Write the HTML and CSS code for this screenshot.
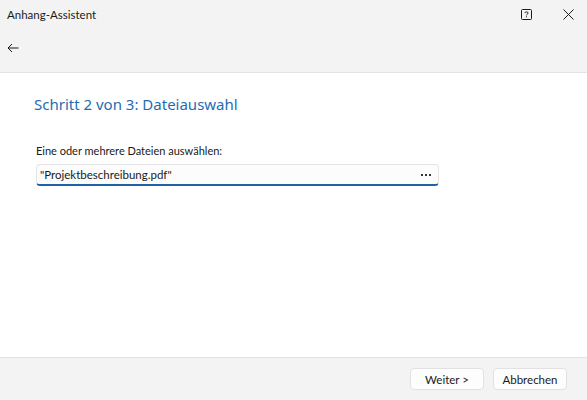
FILE: index.html
```html
<!DOCTYPE html>
<html lang="de">
<head>
  <meta charset="UTF-8" />
  <title>Anhang-Assistent</title>
  <link rel="stylesheet" href="styles.css">
</head>
<body>
  <div class="window">
    <header class="top">
      <div class="titlebar">
        <span class="title">Anhang-Assistent</span>
        <div class="caption-buttons">
          <svg class="help" width="11" height="11" viewBox="0 0 11 11">
            <rect x="0.5" y="0.5" width="10" height="10" rx="1" fill="none" stroke="#1a1a1a" stroke-width="1"/>
            <path d="M3.8 4 C3.8 2.6 7.2 2.6 7.2 4 C7.2 5 5.5 5 5.5 6.3" fill="none" stroke="#1a1a1a" stroke-width="1"/>
            <rect x="5" y="7.3" width="1" height="1" fill="#1a1a1a"/>
          </svg>
          <svg class="close" width="11" height="11" viewBox="0 0 11 11">
            <path d="M0.5 0.5 L10.5 10.5 M10.5 0.5 L0.5 10.5" stroke="#1a1a1a" stroke-width="1"/>
          </svg>
        </div>
      </div>
      <div class="navbar">
        <svg class="back" width="12" height="10" viewBox="0 0 12 10">
          <path d="M11.5 5 H1 M5 1 L1 5 L5 9" fill="none" stroke="#1a1a1a" stroke-width="1"/>
        </svg>
      </div>
    </header>

    <main class="content">
      <h1 class="step-title">Schritt 2 von 3: Dateiauswahl</h1>
      <label class="field-label" for="files">Eine oder mehrere Dateien auswählen:</label>
      <div class="file-input">
        <span id="files" class="file-value">"Projektbeschreibung.pdf"</span>
        <svg class="browse" width="10" height="2" viewBox="0 0 10 2">
          <rect x="0" y="0" width="2" height="2" fill="#333"/>
          <rect x="4" y="0" width="2" height="2" fill="#333"/>
          <rect x="8" y="0" width="2" height="2" fill="#333"/>
        </svg>
      </div>
    </main>

    <footer class="bottom">
      <button class="btn">Weiter &gt;</button>
      <button class="btn">Abbrechen</button>
    </footer>
  </div>
</body>
</html>
```

FILE: styles.css
```css
body {
  margin: 0;
  font-family: 'Lato', 'Noto Sans', sans-serif;
  font-size: 11px;
  color: #1a1a1a;
  background: #ffffff;
}
.window {
  width: 587px;
  height: 400px;
  display: flex;
  flex-direction: column;
}
.top {
  background: #f3f3f3;
  border-bottom: 1px solid #e3e3e3;
  height: 73px;
  box-sizing: border-box;
}
.titlebar {
  height: 28px;
  display: flex;
  justify-content: space-between;
  align-items: center;
  padding: 0 13px 0 7px;
}
.title {
  font-size: 11.5px;
}
.caption-buttons {
  display: flex;
  gap: 31px;
  align-items: center;
}
.navbar {
  height: 40px;
  display: flex;
  align-items: center;
  padding-left: 7px;
}
.content {
  flex: 1;
  padding: 0 36px;
  background: #ffffff;
}
.step-title {
  margin: 20px 0 0 -2px;
  font-family: 'Noto Sans', sans-serif;
  font-size: 15px;
  font-weight: normal;
  color: #1e6db3;
  line-height: 22px;
}
.field-label {
  display: block;
  margin-top: 28px;
  line-height: 16px;
}
.file-input {
  margin-top: 5px;
  width: 403px;
  height: 22px;
  box-sizing: border-box;
  background: #fcfcfc;
  border: 1px solid #e5e5e5;
  border-bottom: 2px solid #1f62a8;
  border-radius: 4px;
  display: flex;
  align-items: center;
  justify-content: space-between;
  padding: 0 7px 0 3px;
  font-size: 11.5px;
}
.bottom {
  height: 42px;
  background: #f3f3f3;
  border-top: 1px solid #e3e3e3;
  display: flex;
  justify-content: flex-end;
  align-items: center;
  gap: 9px;
  padding-right: 20px;
}
.btn {
  width: 74px;
  height: 22px;
  font-family: inherit;
  font-size: 11.5px;
  color: #1a1a1a;
  background: #fdfdfd;
  border: 1px solid #e1e1e1;
  border-radius: 4px;
  padding: 0;
}
```
